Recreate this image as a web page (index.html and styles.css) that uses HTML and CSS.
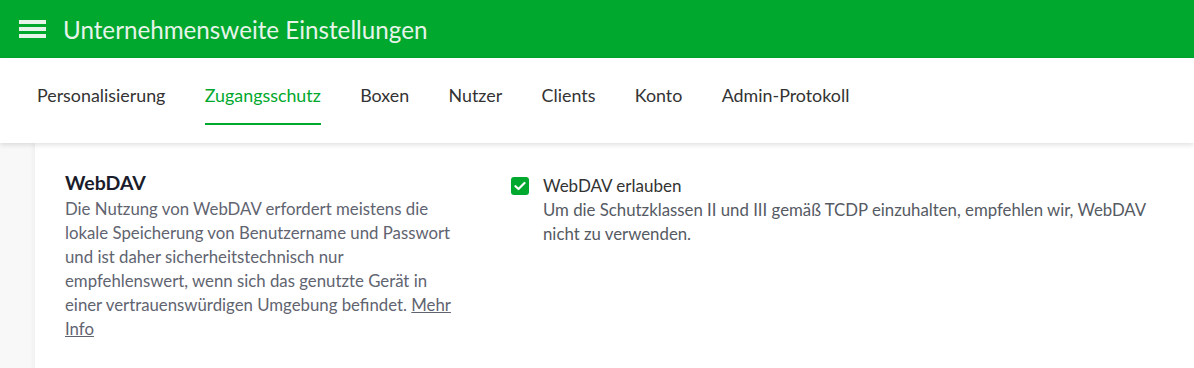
FILE: index.html
```html
<!DOCTYPE html>
<html lang="de">
<head>
    <meta charset="UTF-8">
    <meta name="viewport" content="width=device-width, initial-scale=1.0">
    <title>Unternehmensweite Einstellungen</title>
    <link rel="stylesheet" href="styles.css">
</head>
<body>
    <header class="topbar">
        <button class="menu-button" type="button" aria-label="Menü">
            <svg width="28" height="20" viewBox="0 0 28 20">
                <rect x="0" y="1" width="27" height="4" fill="#e6f4ea"/>
                <rect x="0" y="8" width="27" height="4" fill="#e6f4ea"/>
                <rect x="0" y="15" width="27" height="4" fill="#e6f4ea"/>
            </svg>
        </button>
        <h1>Unternehmensweite Einstellungen</h1>
    </header>

    <nav class="tabs">
        <a href="#" class="tab">Personalisierung</a>
        <a href="#" class="tab active">Zugangsschutz</a>
        <a href="#" class="tab">Boxen</a>
        <a href="#" class="tab">Nutzer</a>
        <a href="#" class="tab">Clients</a>
        <a href="#" class="tab">Konto</a>
        <a href="#" class="tab">Admin-Protokoll</a>
    </nav>

    <main class="page">
        <section class="card">
            <div class="setting-info">
                <h2>WebDAV</h2>
                <p>Die Nutzung von WebDAV erfordert meistens die lokale Speicherung von Benutzername und Passwort und ist daher sicherheitstechnisch nur empfehlenswert, wenn sich das genutzte Gerät in einer vertrauenswürdigen Umgebung befindet. <a href="#">Mehr Info</a></p>
            </div>
            <div class="setting-control">
                <label class="checkbox-row">
                    <span class="checkbox">
                        <svg width="12" height="10" viewBox="0 0 12 10">
                            <path d="M1.5 5.2 L4.5 8 L10.5 2" fill="none" stroke="#fff" stroke-width="2.2" stroke-linecap="round" stroke-linejoin="round"/>
                        </svg>
                    </span>
                    <span class="checkbox-text">
                        <span class="checkbox-label">WebDAV erlauben</span>
                        <span class="checkbox-hint">Um die Schutzklassen II und III gemäß TCDP einzuhalten, empfehlen wir, WebDAV nicht zu verwenden.</span>
                    </span>
                </label>
            </div>
        </section>
    </main>
</body>
</html>
```

FILE: styles.css
```css
body {
    font-family: Lato, 'Open Sans', sans-serif;
    margin: 0;
    background-color: #f8f8f8;
    color: #333;
}
.topbar {
    background-color: #00a82d;
    height: 58px;
    display: flex;
    align-items: center;
    padding-left: 19px;
    gap: 16px;
}
.menu-button {
    background: none;
    border: none;
    padding: 0;
    display: flex;
    cursor: pointer;
}
.topbar h1 {
    margin: 0;
    font-size: 24.2px;
    font-weight: 400;
    color: #e6f4ea;
}
.tabs {
    position: relative;
    z-index: 1;
    background-color: #fff;
    height: 85px;
    display: flex;
    align-items: flex-start;
    padding-left: 37px;
    gap: 39.4px;
    box-shadow: 0 2px 5px rgba(0, 0, 0, 0.12);
}
.tab {
    font-size: 17.85px;
    line-height: 22px;
    color: #333;
    text-decoration: none;
    padding-top: 26px;
    height: 39px;
    border-bottom: 2px solid transparent;
}
.tab.active {
    color: #00a82d;
    border-bottom-color: #00a82d;
}
.page {
    padding-left: 35px;
}
.card {
    background-color: #fff;
    min-height: 225px;
    box-shadow: -2px 0 4px rgba(0, 0, 0, 0.04);
    padding: 27px 30px 0 30px;
    display: grid;
    grid-template-columns: 400px 1fr;
    gap: 46px;
}
.setting-info h2 {
    margin: 0 0 1px;
    font-size: 19.5px;
    line-height: 26px;
    font-weight: 700;
    color: #1b1d2b;
}
.setting-info p {
    margin: 0;
    font-size: 16.8px;
    line-height: 24px;
    color: #5f6470;
}
.setting-info a {
    color: #5f6470;
    text-decoration: underline;
}
.setting-control {
    padding-top: 4px;
}
.checkbox-row {
    display: flex;
    gap: 14px;
    cursor: pointer;
}
.checkbox {
    flex: none;
    width: 18px;
    height: 18px;
    margin-top: 3px;
    border-radius: 3px;
    background-color: #00a82d;
    display: flex;
    align-items: center;
    justify-content: center;
}
.checkbox-text {
    display: flex;
    flex-direction: column;
    line-height: 24px;
}
.checkbox-label {
    font-size: 17px;
    color: #333;
}
.checkbox-hint {
    font-size: 16.8px;
    color: #555a63;
}
```
